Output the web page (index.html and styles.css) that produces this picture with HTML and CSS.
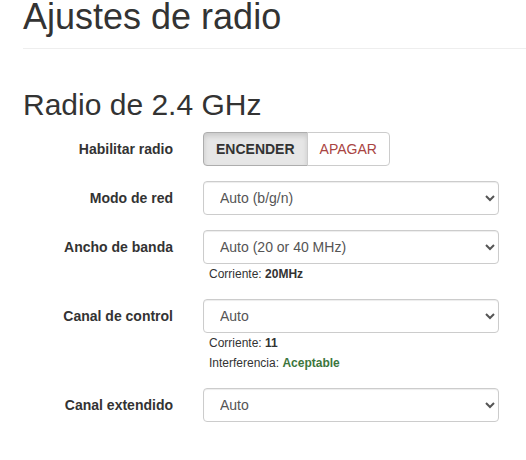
FILE: index.html
```html
<!DOCTYPE html>
<html lang="es">
<head>
    <meta charset="UTF-8">
    <meta name="viewport" content="width=device-width, initial-scale=1.0">
    <title>Ajustes de radio</title>
    <link rel="stylesheet" href="styles.css">
</head>
<body>

    <div class="page">
        <div class="page-header">
            <h1>Ajustes de radio</h1>
        </div>

        <h2>Radio de 2.4 GHz</h2>

        <form class="settings">
            <div class="form-group">
                <label class="control-label">Habilitar radio</label>
                <div class="controls">
                    <div class="btn-group">
                        <button type="button" class="btn active">ENCENDER</button>
                        <button type="button" class="btn btn-off">APAGAR</button>
                    </div>
                </div>
            </div>

            <div class="form-group">
                <label class="control-label" for="mode">Modo de red</label>
                <div class="controls">
                    <select id="mode" class="form-control">
                        <option>Auto (b/g/n)</option>
                    </select>
                </div>
            </div>

            <div class="form-group">
                <label class="control-label" for="width">Ancho de banda</label>
                <div class="controls">
                    <select id="width" class="form-control">
                        <option>Auto (20 or 40 MHz)</option>
                    </select>
                    <div class="help">Corriente: <b>20MHz</b></div>
                </div>
            </div>

            <div class="form-group">
                <label class="control-label" for="channel">Canal de control</label>
                <div class="controls">
                    <select id="channel" class="form-control">
                        <option>Auto</option>
                    </select>
                    <div class="help">Corriente: <b>11</b></div>
                    <div class="help">Interferencia: <b class="ok">Aceptable</b></div>
                </div>
            </div>

            <div class="form-group">
                <label class="control-label" for="ext">Canal extendido</label>
                <div class="controls">
                    <select id="ext" class="form-control">
                        <option>Auto</option>
                    </select>
                </div>
            </div>
        </form>
    </div>

</body>
</html>
```

FILE: styles.css
```css
/* General Styles */
body {
    margin: 0;
    font-family: 'Liberation Sans', Arial, sans-serif;
    font-size: 14px;
    color: #333;
    background: #fff;
}

.page {
    padding-left: 23px;
}

.page-header {
    padding-bottom: 14px;
    border-bottom: 1px solid #eee;
}

h1 {
    margin: 0;
    font-size: 36px;
    font-weight: 500;
    line-height: 34px;
}

h2 {
    margin: 39px 0 11px;
    font-size: 30px;
    font-weight: 500;
    line-height: 33px;
}

/* Form rows */
.settings {
    width: 476px;
}

.form-group {
    display: grid;
    grid-template-columns: 150px 296px;
    column-gap: 30px;
    align-items: start;
    margin-bottom: 15px;
}

.control-label {
    text-align: right;
    font-weight: bold;
    line-height: 34px;
}

.form-control {
    display: block;
    width: 100%;
    height: 34px;
    padding: 6px 12px;
    font-family: inherit;
    font-size: 14px;
    color: #555;
    background: #fff;
    border: 1px solid #ccc;
    border-radius: 4px;
    box-shadow: inset 0 1px 1px rgba(0, 0, 0, 0.075);
}

.help {
    font-size: 12px;
    line-height: 20px;
    padding-left: 6px;
    color: #333;
}

.help .ok {
    color: #3c763d;
}

/* Toggle buttons */
.btn-group {
    display: flex;
}

.btn {
    height: 34px;
    padding: 6px 12px;
    font-family: inherit;
    font-size: 14px;
    line-height: 20px;
    background: #fff;
    border: 1px solid #ccc;
    color: #333;
}

.btn.active {
    font-weight: bold;
    background: #e6e6e6;
    border-color: #adadad;
    border-radius: 4px 0 0 4px;
    box-shadow: inset 0 3px 5px rgba(0, 0, 0, 0.125);
}

.btn-off {
    margin-left: -1px;
    color: #a94442;
    border-radius: 0 4px 4px 0;
}
```
